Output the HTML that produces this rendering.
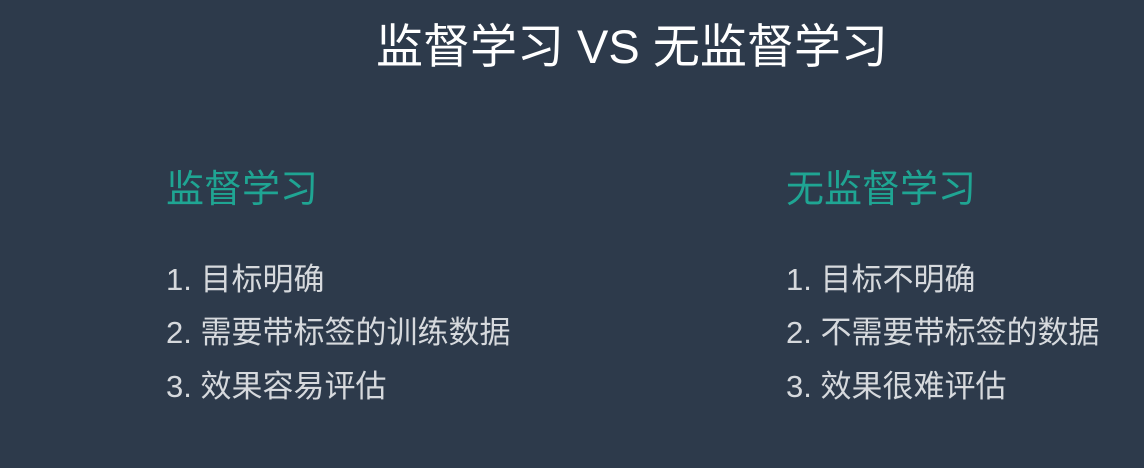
<!DOCTYPE html><html><head><meta charset="utf-8"><style>
body{margin:0;width:1144px;height:468px;background:#2d3a4b;overflow:hidden;font-family:"Liberation Sans","Noto Sans CJK SC",sans-serif;position:relative}
.t{position:absolute;white-space:nowrap}
h1{position:absolute;left:376px;top:16px;margin:0;font-size:47px;font-weight:normal;color:#fff;line-height:62px}
.h{font-size:38px;color:#1fa593;line-height:44px}
.i{font-size:31px;color:#d6d9dd;line-height:36px}
</style></head><body>
<h1>监督学习 VS 无监督学习</h1>
<div class="t h" style="left:166px;top:168px">监督学习</div>
<div class="t h" style="left:786px;top:168px">无监督学习</div>
<div class="t i" style="left:166px;top:262px">1. 目标明确</div>
<div class="t i" style="left:166px;top:315px">2. 需要带标签的训练数据</div>
<div class="t i" style="left:166px;top:369px">3. 效果容易评估</div>
<div class="t i" style="left:786px;top:262px">1. 目标不明确</div>
<div class="t i" style="left:786px;top:315px">2. 不需要带标签的数据</div>
<div class="t i" style="left:786px;top:369px">3. 效果很难评估</div>
</body></html>
